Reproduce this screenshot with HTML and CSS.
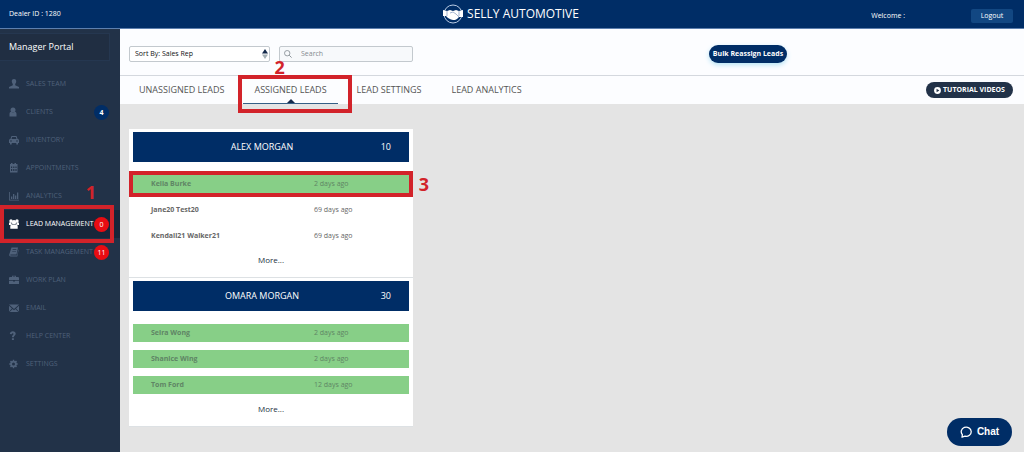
FILE: index.html
```html
<!DOCTYPE html>
<html lang="en">
<head>
<meta charset="utf-8">
<title>Selly Automotive - Assigned Leads</title>
<link rel="stylesheet" href="styles.css">
</head>
<body>
<header class="topbar">
  <span class="dealer">Dealer ID : 1280</span>
  <div class="brand">
    <svg class="logo" viewBox="0 0 20 20"><circle cx="10" cy="10" r="9" fill="none" stroke="#b9cbe4" stroke-width="1"/><path fill="#fff" d="M0 6l4 1 3-1 3 1 3-1 3 1 4-1v7l-4 0-2 2-2 1-2 0-2-.5-3-1.500-2-2-3 0z"/><path d="M7 9l3-1 3 2 3 3M4 7v5M16 7v5" fill="none" stroke="#7f97bd" stroke-width=".7"/></svg>
    <span>SELLY AUTOMOTIVE</span>
  </div>
  <div class="account">
    <span>Welcome :</span>
    <button class="logout" type="button">Logout</button>
  </div>
</header>
<div class="shell">
  <aside class="sidebar">
    <h1 class="portal">Manager Portal</h1>
    <nav class="menu">
      <a class="item" href="#"><svg class="icon" viewBox="0 0 10 10"><path d="M5 0c1.700 0 2.400 1.200 2.200 2.800-.1 1-.6 1.800-1 2.200v1.200L10 8v1.500H0V8l3.800-1.800V5c-.4-.4-.9-1.200-1-2.200C2.600 1.200 3.300 0 5 0z"/></svg><span class="label">SALES TEAM</span></a>
      <a class="item" href="#"><svg class="icon" viewBox="0 0 10 10"><circle cx="4" cy="3" r="2.500"/><path d="M.5 9.500V7c0-1.500.8-2.300 1.700-2.300 1 1 2.600 1 3.600 0 .9 0 1.700.8 1.700 2.300v2.500z"/></svg><span class="label">CLIENTS</span><span class="badge blue">4</span></a>
      <a class="item" href="#"><svg class="icon" viewBox="0 0 10 10"><path fill-rule="evenodd" d="M2.500 1h5l1.100 3c.8 0 1.400.6 1.400 1.400V8H9v1.500H7.300V8H2.700v1.500H1V8H0V5.400C0 4.600.6 4 1.400 4zM3.200 2L2.500 4h5l-.7-2zM2 5.200a.8.8 0 100 1.600.8.8 0 000-1.600zm6 0a.8.8 0 100 1.600.8.8 0 000-1.600z"/></svg><span class="label">INVENTORY</span></a>
      <a class="item" href="#"><svg class="icon" viewBox="0 0 10 10"><path fill-rule="evenodd" d="M1 1h1V0h1.500v1h2V0H7v1h1.500v8.500H1zM2 3.500V5h1.200V3.500zm2.200 0V5h1.200V3.500zm2.200 0V5h1.200V3.500zM2 6v2h1.200V6zm2.200 0v2h1.200V6zm2.200 0v2h1.200V6z"/></svg><span class="label">APPOINTMENTS</span></a>
      <a class="item" href="#"><svg class="icon" viewBox="0 0 10 10"><path d="M0 1h.8v7.700H10v.8H0zM2 5.500h1.300V8H2zM4 3h1.300v5H4zM6 4.500h1.300V8H6zM8 1.500h1.300V8H8z"/></svg><span class="label">ANALYTICS</span></a>
      <a class="item active" href="#" aria-current="page"><svg class="icon" viewBox="0 0 10 10"><circle cx="2" cy="2" r="1.700"/><circle cx="8" cy="2" r="1.700"/><circle cx="5" cy="3.300" r="2.200"/><path d="M0 6V4.500C0 3.500 1 3.200 2.300 3.400 2.400 4.500 3 5.300 2 6zM10 6V4.500c0-1-1-1.300-2.300-1.100C7.600 4.500 7 5.300 8 6zM1.300 9.800V7.200C1.300 6 2.200 5.300 3 5.200c1.100.8 2.900.8 4 0 .8.1 1.700.8 1.700 2v2.600z"/></svg><span class="label">LEAD MANAGEMENT</span><span class="badge red">0</span><span class="mark mark-menu"><b class="step">1</b></span></a>
      <a class="item" href="#"><svg class="icon" viewBox="0 0 10 10"><path fill-rule="evenodd" d="M2.500.5H9L7.500 7.500H1.800c-.8 0-.8 1 0 1H8l1.300-6 .3.500L8.300 9.500H1.500C.5 9.500-.1 8.500.3 7.300zM3.700 2.200l-.2.700h3.800l.2-.7zM3.300 3.900l-.2.700h3.800l.2-.7z"/></svg><span class="label">TASK MANAGEMENT</span><span class="badge red">11</span></a>
      <a class="item" href="#"><svg class="icon" viewBox="0 0 10 10"><path fill-rule="evenodd" d="M3 2V.8h4V2h2.300l.7.700V5H0V2.700L.7 2zm.8-.5V2h2.400v-.5zM0 5.700h4v.8h2v-.8h4V9H0z"/></svg><span class="label">WORK PLAN</span></a>
      <a class="item" href="#"><svg class="icon" viewBox="0 0 10 10"><path d="M0 1.500h10L5 6zM0 2.700l3 2.700-3 3zM10 2.700L7 5.400l3 3zM.5 9l3.200-3L5 7.200 6.300 6l3.200 3z"/></svg><span class="label">EMAIL</span></a>
      <a class="item" href="#"><svg class="icon" viewBox="0 0 10 10"><path d="M.8 3C1 1 2.300.2 3.800.2c1.700 0 2.900.9 2.900 2.400C6.700 4.600 4.900 4.600 4.900 6.300H2.900c0-2.200 1.600-2.300 1.600-3.400C4.500 1.900 3 1.900 2.800 3.300zM2.900 7.200h2V9h-2z"/></svg><span class="label">HELP CENTER</span></a>
      <a class="item" href="#"><svg class="icon" viewBox="0 0 10 10"><circle cx="4.500" cy="5" r="2.400" fill="none" stroke="currentColor" stroke-width="1.800"/><path d="M4.500.8v1.700M4.500 7.500v1.700M.3 5H2M7 5h1.700M1.500 2l1.300 1.300M6.200 6.700L7.500 8M7.500 2L6.200 3.300M2.800 6.700L1.500 8" stroke="currentColor" stroke-width="1.500"/></svg><span class="label">SETTINGS</span></a>
    </nav>
  </aside>
  <main class="main">
    <div class="toolbar">
      <div class="field">
        <select class="sort" aria-label="Sort by"><option>Sort By: Sales Rep</option></select>
        <svg class="sort-arrows" viewBox="0 0 6 10"><path d="M3 0l3 4.500H0z" fill="#14294b"/><path d="M3 10L0 5.500h6z" fill="#a5b0b5"/></svg>
      </div>
      <div class="field">
        <input class="search" type="search" placeholder="Search" aria-label="Search">
        <svg class="lens" viewBox="0 0 8 8"><circle cx="3.200" cy="3.200" r="2.700" fill="none" stroke="#8d959b" stroke-width=".9"/><path d="M5.200 5.200L7.600 7.600" stroke="#8d959b"/></svg>
      </div>
      <button class="bulk" type="button">Bulk Reassign Leads</button>
    </div>
    <div class="tabs">
      <a class="tab" href="#">UNASSIGNED LEADS</a>
      <a class="tab selected" href="#">ASSIGNED LEADS<span class="mark mark-tab"><b class="step">2</b></span></a>
      <a class="tab" href="#">LEAD SETTINGS</a>
      <a class="tab" href="#">LEAD ANALYTICS</a>
      <button class="tutorial" type="button"><svg class="play" viewBox="0 0 8 8"><circle cx="4" cy="4" r="3.900" fill="#fff"/><path d="M2.900 2l3.200 2-3.200 2z" fill="#223248"/></svg>TUTORIAL VIDEOS</button>
    </div>
    <div class="board">
      <section class="card">
        <h2 class="rep"><span>ALEX MORGAN</span><span class="count">10</span></h2>
        <ul class="leads">
          <li class="lead fresh"><b>Kelia Burke</b><span>2 days ago</span><span class="mark mark-lead"><b class="step">3</b></span></li>
          <li class="lead"><b>Jane20 Test20</b><span>69 days ago</span></li>
          <li class="lead"><b>Kendall21 Walker21</b><span>69 days ago</span></li>
        </ul>
        <a class="more" href="#">More...</a>
      </section>
      <section class="card">
        <h2 class="rep"><span>OMARA MORGAN</span><span class="count">30</span></h2>
        <ul class="leads">
          <li class="lead fresh"><b>Seira Wong</b><span>2 days ago</span></li>
          <li class="lead fresh"><b>Shanice Wing</b><span>2 days ago</span></li>
          <li class="lead fresh"><b>Tom Ford</b><span>12 days ago</span></li>
        </ul>
        <a class="more" href="#">More...</a>
      </section>
    </div>
  </main>
</div>
<button class="chat" type="button"><svg class="bubble" viewBox="0 0 12 12"><path d="M2 11.200l.4-2.500A5 4.600 0 1 1 5 10.200z" fill="none" stroke="#fff" stroke-width="1.300" stroke-linejoin="round"/></svg>Chat</button>
</body>
</html>
```
FILE: styles.css
```css
* { box-sizing: border-box; }
body {
  margin: 0;
  min-height: 100vh;
  display: flex;
  flex-direction: column;
  font-family: "Open Sans", "Noto Sans", sans-serif;
  font-size: 7px;
  line-height: 12px;
  color: #555;
}
a { color: inherit; text-decoration: none; }
button, input, select { font: inherit; }

.topbar {
  display: grid;
  grid-template-columns: 1fr auto 1fr;
  align-items: center;
  height: 29px;
  padding: 0 11px 0 9px;
  background: #002d66;
  border-bottom: 1px solid #5d7fae;
  color: #fff;
}
.brand { display: flex; align-items: center; gap: 4px; font-size: 12px; line-height: 16px; }
.logo { width: 20px; height: 20px; }
.account { display: flex; align-items: center; justify-content: flex-end; gap: 66px; padding-top: 3px; }
.logout {
  width: 42px;
  height: 14px;
  padding: 0;
  border: 0;
  border-radius: 2px;
  background: #124782;
  color: #fff;
  line-height: 14px;
}

.shell { flex: 1; display: flex; }
.sidebar { width: 120px; flex: none; background: #223248; }
.portal {
  margin: 4px 10px 7px 0;
  padding: 0 9px;
  border: 1px solid #253750;
  border-left: 0;
  background: #202e42;
  color: #fff;
  font-size: 9px;
  font-weight: 500;
  line-height: 26px;
}
.menu { display: flex; flex-direction: column; padding-top: 2px; }
.item {
  position: relative;
  display: flex;
  align-items: center;
  height: 28px;
  padding: 0 11px 0 9px;
  color: #4f617a;
}
.icon { width: 10px; height: 10px; margin-right: 7px; fill: currentColor; }
.label { flex: 1; white-space: nowrap; }
.active { background: #18263a; color: #fff; }
.badge {
  width: 15px;
  height: 15px;
  border-radius: 50%;
  color: #fff;
  line-height: 15px;
  text-align: center;
}
.blue { background: #002d66; font-weight: 700; }
.red { background: #e80c12; }

.main { flex: 1; min-width: 0; display: flex; flex-direction: column; background: #e4e4e4; }
.toolbar {
  display: flex;
  align-items: center;
  gap: 9px;
  height: 47px;
  padding: 3px 9px 0;
  background: #fcfdff;
  border-bottom: 1px solid #d4d8de;
}
.field { position: relative; display: flex; }
.sort, .search {
  appearance: none;
  height: 16px;
  margin: 0;
  border: 1px solid #c3c9ce;
  border-radius: 2px;
  outline: 0;
}
.sort { width: 141px; padding: 0 5px; background: #fff; color: #111; }
.search { width: 134px; padding: 0 21px; background: #f7f9fb; color: #777; }
.search::placeholder { color: #858b90; }
.sort-arrows { position: absolute; right: 2px; top: 3px; width: 6px; height: 10px; }
.lens { position: absolute; left: 5px; top: 4px; width: 8px; height: 8px; }
.bulk {
  width: 78px;
  height: 18px;
  margin: 0 228px 0 auto;
  padding: 0;
  border: 0;
  border-radius: 9px;
  background: #002d66;
  box-shadow: 0 2px 5px #b5e3f5;
  color: #fff;
  font-weight: 700;
  white-space: nowrap;
}

.tabs {
  display: flex;
  align-items: stretch;
  height: 28px;
  padding: 0 11px 0 8px;
  background: #fcfdff;
}
.tab {
  position: relative;
  padding: 0 11px;
  margin-right: 8px;
  color: #555;
  font-size: 9px;
  line-height: 27px;
  white-space: nowrap;
}
.selected { border-bottom: 1px solid #355f86; }
.selected::after {
  content: "";
  position: absolute;
  left: 50%;
  bottom: 0;
  margin-left: -4px;
  border: 4px solid transparent;
  border-top: 0;
  border-bottom-color: #14294b;
}
.tutorial {
  display: flex;
  align-items: center;
  justify-content: center;
  gap: 2px;
  align-self: center;
  width: 87px;
  height: 16px;
  margin-left: auto;
  padding: 0;
  border: 0;
  border-radius: 8px;
  background: #223248;
  color: #fff;
  font-weight: 700;
  white-space: nowrap;
}
.play { width: 7px; height: 7px; }

.board { padding: 25px 9px 27px; }
.card {
  width: 284px;
  padding: 3px 4px 10px;
  background: #fff;
  border-bottom: 1px solid #dde1e4;
}
.rep {
  display: grid;
  grid-template-columns: 1fr auto 1fr;
  align-items: center;
  margin: 0 0 13px;
  padding: 0 18px 0 0;
  background: #002d66;
  color: #fff;
  font-size: 9px;
  font-weight: 400;
  line-height: 30px;
}
.rep span:first-child { grid-column: 2; }
.count { text-align: right; }
.leads { display: flex; flex-direction: column; gap: 8px; margin: 0; padding: 0; list-style: none; }
.lead {
  position: relative;
  display: grid;
  grid-template-columns: 163px 1fr;
  padding-left: 18px;
  color: #666;
  line-height: 18px;
}
.lead b { font-weight: 700; }
.fresh { background: #87cf87; color: #5f8565; }
.more { display: block; margin-top: 8px; color: #222f40; font-size: 8px; text-align: center; line-height: 14px; }

.mark { position: absolute; border: 4px solid #d2232a; z-index: 1; pointer-events: none; }
.mark-menu { left: 0; right: 6px; top: -5px; bottom: -5px; }
.mark-tab { left: -5px; right: -14px; top: -1px; bottom: -10px; }
.mark-lead { left: -4px; right: -4px; top: -4px; bottom: -4px; }
.mark .step { position: absolute; color: #d2232a; font-size: 18px; font-weight: 700; line-height: 20px; }
.mark-menu .step { right: 14px; top: -27px; }
.mark-tab .step { left: 32px; top: -22px; }
.mark-lead .step { right: -20px; top: -1px; }

.chat {
  position: fixed;
  right: 12px;
  bottom: 6px;
  display: flex;
  align-items: center;
  justify-content: center;
  gap: 5px;
  width: 65px;
  height: 28px;
  padding: 0;
  border: 0;
  border-radius: 14px;
  background: #002d66;
  color: #fff;
  font-family: "Liberation Sans", Arial, sans-serif;
  font-size: 10px;
  font-weight: 700;
}
.bubble { width: 12px; height: 12px; }
```
